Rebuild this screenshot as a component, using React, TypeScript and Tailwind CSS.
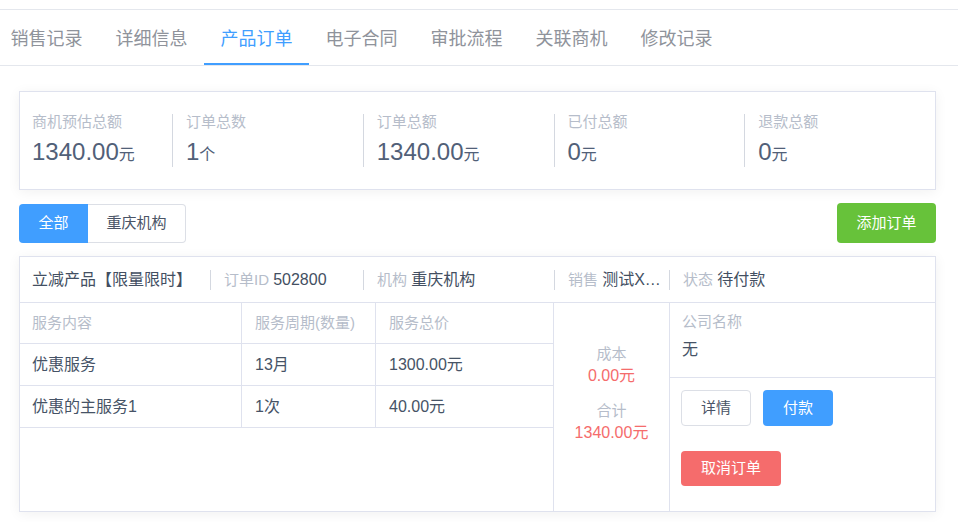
import React from "react";

const FONT = "font-['Liberation_Sans','Noto_Sans_CJK_SC',sans-serif]";

const tabs = ["销售记录", "详细信息", "产品订单", "电子合同", "审批流程", "关联商机", "修改记录"];

const stats = [
  { label: "商机预估总额", value: "1340.00", unit: "元" },
  { label: "订单总数", value: "1", unit: "个" },
  { label: "订单总额", value: "1340.00", unit: "元" },
  { label: "已付总额", value: "0", unit: "元" },
  { label: "退款总额", value: "0", unit: "元" },
];

const rows = [
  { name: "优惠服务", period: "13月", price: "1300.00元" },
  { name: "优惠的主服务1", period: "1次", price: "40.00元" },
];

export default function App() {
  return (
    <div className={`${FONT} w-[958px] h-[522px] bg-white overflow-hidden`}>
      <div className="h-[9px]" />
      {/* Tabs */}
      <div className="border-t border-b border-[#e4e7ed] h-[57px]">
        <div className="flex -ml-[6px] h-[55px]">
          {tabs.map((t, i) => (
            <div
              key={t}
              className={
                i === 2
                  ? "w-[105px] h-[55px] flex items-center justify-center text-[18px] text-[#409eff] border-b-2 border-[#409eff] pt-[5px]"
                  : "w-[105px] h-[55px] flex items-center justify-center text-[18px] text-[#8f939b] pt-[3px]"
              }
            >
              {t}
            </div>
          ))}
        </div>
      </div>

      <div className="pl-[19px] pr-[22px]">
        {/* Summary card */}
        <div className="mt-[25px] border border-[#dfe2ee] bg-white shadow-[0_2px_12px_0_rgba(0,0,0,0.06)] h-[99px] pt-[22px] flex">
          {stats.map((s, i) => (
            <div
              key={s.label}
              className={
                i === 0
                  ? "w-[152px] pl-[12px] h-[53px] flex flex-col justify-between"
                  : "flex-1 border-l border-[#d4d8e0] pl-[13px] h-[53px] flex flex-col justify-between"
              }
            >
              <div className="text-[15px] leading-[16px] text-[#b6bdca]">{s.label}</div>
              <div className="leading-[24px] text-[#516078]">
                <span className="text-[24px]">{s.value}</span>
                <span className="text-[16px]">{s.unit}</span>
              </div>
            </div>
          ))}
        </div>

        {/* Filter row */}
        <div className="mt-[13px] flex items-center justify-between">
          <div className="flex h-[39px]">
            <div className="w-[69px] h-[39px] flex items-center justify-center bg-[#409eff] text-white text-[15px] rounded-l-[4px]">
              全部
            </div>
            <div className="w-[98px] h-[39px] flex items-center justify-center border border-l-0 border-[#dcdfe6] text-[#4a5466] text-[15px] rounded-r-[4px]">
              重庆机构
            </div>
          </div>
          <div className="w-[99px] h-[40px] flex items-center justify-center bg-[#67c23a] text-white text-[15px] rounded-[4px]">
            添加订单
          </div>
        </div>

        {/* Order card */}
        <div className="mt-[13px] border border-[#dfe2ee] bg-white shadow-[0_2px_12px_0_rgba(0,0,0,0.06)] h-[256px] flex flex-col">
          {/* header */}
          <div className="h-[46px] border-b border-[#dfe2ee] flex items-center shrink-0 pt-[1px]">
            <div className="w-[190px] pl-[12px] text-[16px] leading-[20px] text-[#434f62] whitespace-nowrap">
              立减产品【限量限时】
            </div>
            <div className="w-[153px] h-[20px] leading-[20px] border-l border-[#d4d8e0] pl-[13px] whitespace-nowrap">
              <span className="text-[15px] text-[#b6bdca]">订单ID </span>
              <span className="text-[16px] text-[#434f62]">502800</span>
            </div>
            <div className="w-[191px] h-[20px] leading-[20px] border-l border-[#d4d8e0] pl-[13px] whitespace-nowrap">
              <span className="text-[15px] text-[#b6bdca]">机构 </span>
              <span className="text-[16px] text-[#434f62]">重庆机构</span>
            </div>
            <div className="w-[115px] h-[20px] leading-[20px] border-l border-[#d4d8e0] pl-[13px] pr-[1px] whitespace-nowrap overflow-hidden text-ellipsis text-[16px] text-[#434f62]">
              <span className="text-[15px] text-[#b6bdca]">销售 </span>
              测试XX账号
            </div>
            <div className="flex-1 h-[20px] leading-[20px] border-l border-[#d4d8e0] pl-[13px] whitespace-nowrap">
              <span className="text-[15px] text-[#b6bdca]">状态 </span>
              <span className="text-[16px] text-[#434f62]">待付款</span>
            </div>
          </div>

          {/* body */}
          <div className="flex flex-1">
            <div className="w-[534px] border-r border-[#dfe2ee] flex flex-col">
              <div className="flex h-[41px] border-b border-[#dfe2ee] items-center text-[15px] text-[#b6bdca]">
                <div className="w-[222px] h-full flex items-center pl-[12px] border-r border-[#dfe2ee]">服务内容</div>
                <div className="w-[134px] h-full flex items-center pl-[13px] border-r border-[#dfe2ee]">服务周期(数量)</div>
                <div className="flex-1 h-full flex items-center pl-[13px]">服务总价</div>
              </div>
              {rows.map((r) => (
                <div key={r.name} className="flex h-[42px] border-b border-[#dfe2ee] items-center text-[16px] text-[#465366]">
                  <div className="w-[222px] h-full flex items-center pl-[12px] border-r border-[#dfe2ee]">{r.name}</div>
                  <div className="w-[134px] h-full flex items-center pl-[13px] border-r border-[#dfe2ee]">{r.period}</div>
                  <div className="flex-1 h-full flex items-center pl-[13px]">{r.price}</div>
                </div>
              ))}
            </div>

            <div className="w-[116px] border-r border-[#dfe2ee] flex flex-col items-center pt-[40px]">
              <div className="text-[15px] leading-[22px] text-[#b6bdca]">成本</div>
              <div className="text-[16px] leading-[22px] text-[#f56c6c]">0.00元</div>
              <div className="mt-[13px] text-[15px] leading-[22px] text-[#b6bdca]">合计</div>
              <div className="text-[16px] leading-[22px] text-[#f56c6c]">1340.00元</div>
            </div>

            <div className="flex-1 flex flex-col">
              <div className="h-[75px] border-b border-[#dfe2ee] pl-[12px] pt-[9px]">
                <div className="text-[15px] leading-[20px] text-[#b6bdca]">公司名称</div>
                <div className="mt-[8px] text-[16px] leading-[20px] text-[#465366]">无</div>
              </div>
              <div className="pl-[11px] pt-[12px]">
                <div className="flex gap-[12px]">
                  <div className="w-[70px] h-[36px] flex items-center justify-center border border-[#dcdfe6] rounded-[4px] text-[15px] text-[#4a5466]">
                    详情
                  </div>
                  <div className="w-[70px] h-[36px] flex items-center justify-center bg-[#409eff] rounded-[4px] text-[15px] text-white">
                    付款
                  </div>
                </div>
                <div className="mt-[25px] w-[100px] h-[35px] flex items-center justify-center bg-[#f56c6c] rounded-[4px] text-[15px] text-white">
                  取消订单
                </div>
              </div>
            </div>
          </div>
        </div>
      </div>
    </div>
  );
}
